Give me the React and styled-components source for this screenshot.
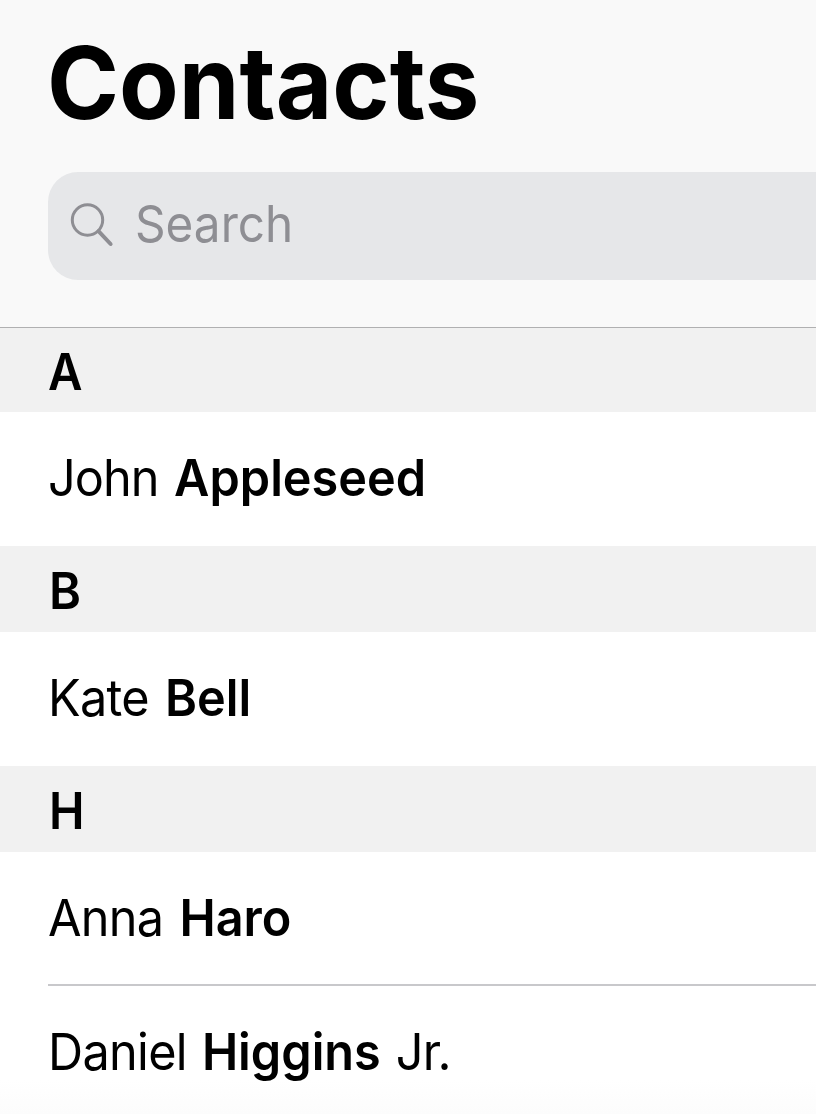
import React from 'react';
import styled, { createGlobalStyle } from 'styled-components';

const GlobalStyle = createGlobalStyle`
  * { box-sizing: border-box; }
  body { margin: 0; background: #fff; overflow: hidden; font-family: Inter, "Liberation Sans", sans-serif; color: #000; }
`;
const Page = styled.main`
  height: 1114px;
  overflow: hidden;
  background: linear-gradient(#fff 1080px, #fcfcfc 1114px);
`;
const Header = styled.header`
  height: 328px;
  padding: 30px 0 0 48px;
  background: #f9f9f9;
  border-bottom: 1px solid #b0b0b1;
`;
const Title = styled.h1`
  margin: 0;
  height: 142px;
  font-size: 101px;
  line-height: 104px;
  font-weight: 700;
  white-space: nowrap;
`;
const Fit = styled.span`
  display: inline-block;
  white-space: pre;
  margin-left: ${(p) => p.$shift || 0}px;
  letter-spacing: ${(p) => p.$spacing || 0}px;
  word-spacing: ${(p) => p.$gap || 0}px;
  transform: scaleX(${(p) => p.$scale || 0.953});
  transform-origin: left;
`;
const Search = styled.div`
  display: flex;
  align-items: center;
  height: 108px;
  padding: 0 0 5px 22px;
  border-radius: 30px 0 0 30px;
  background: #e6e7e9;
  color: #8e8e93;
  font-size: 51px;
  line-height: 60px;
  gap: 21px;
`;
const SearchIcon = styled.svg`
  width: 44px;
  height: 44px;
  margin-top: 3px;
`;
const SectionTitle = styled.h2`
  display: flex;
  align-items: center;
  margin: 0;
  height: ${(p) => p.$h}px;
  padding: 4px 0 0 48px;
  background: #f1f1f1;
  font-size: 51px;
  line-height: 60px;
  font-weight: 600;
`;
const Row = styled.div`
  display: flex;
  align-items: center;
  height: 134px;
  margin-left: 48px;
  padding-bottom: ${(p) => (p.$divider ? 0 : 2)}px;
  border-bottom: ${(p) => (p.$divider ? '2px solid #c8c8cb' : 'none')};
  font-size: 51px;
  line-height: 60px;
  strong { font-weight: 600; letter-spacing: 0; }
`;

export default function App() {
  return (
    <>
      <GlobalStyle />
      <Page>
        <Header>
          <Title><Fit $scale={0.965} $shift={-1}>Contacts</Fit></Title>
          <Search>
            <SearchIcon viewBox="0 0 44 44" fill="none" stroke="currentColor" strokeWidth="3" strokeLinecap="round">
              <circle cx="17.5" cy="17" r="15.2" />
              <path d="M28.5 28.2L40.6 41" strokeWidth="4" />
            </SearchIcon>
            <Fit $scale={0.935}>Search</Fit>
          </Search>
        </Header>
        <SectionTitle $h={84}><Fit $scale={0.93}>A</Fit></SectionTitle>
        <Row><Fit $spacing={-1} $gap={3}>John <strong>Appleseed</strong></Fit></Row>
        <SectionTitle $h={86}><Fit $shift={0.7}>B</Fit></SectionTitle>
        <Row><Fit $spacing={-0.7} $gap={3}>Kate <strong>Bell</strong></Fit></Row>
        <SectionTitle $h={86}><Fit $shift={0.7} $scale={0.935}>H</Fit></SectionTitle>
        <Row $divider><Fit $spacing={-0.8} $gap={3.5}>Anna <strong>Haro</strong></Fit></Row>
        <Row><Fit $spacing={-0.7} $gap={2}>Daniel <strong>Higgins</strong> Jr.</Fit></Row>
      </Page>
    </>
  );
}
